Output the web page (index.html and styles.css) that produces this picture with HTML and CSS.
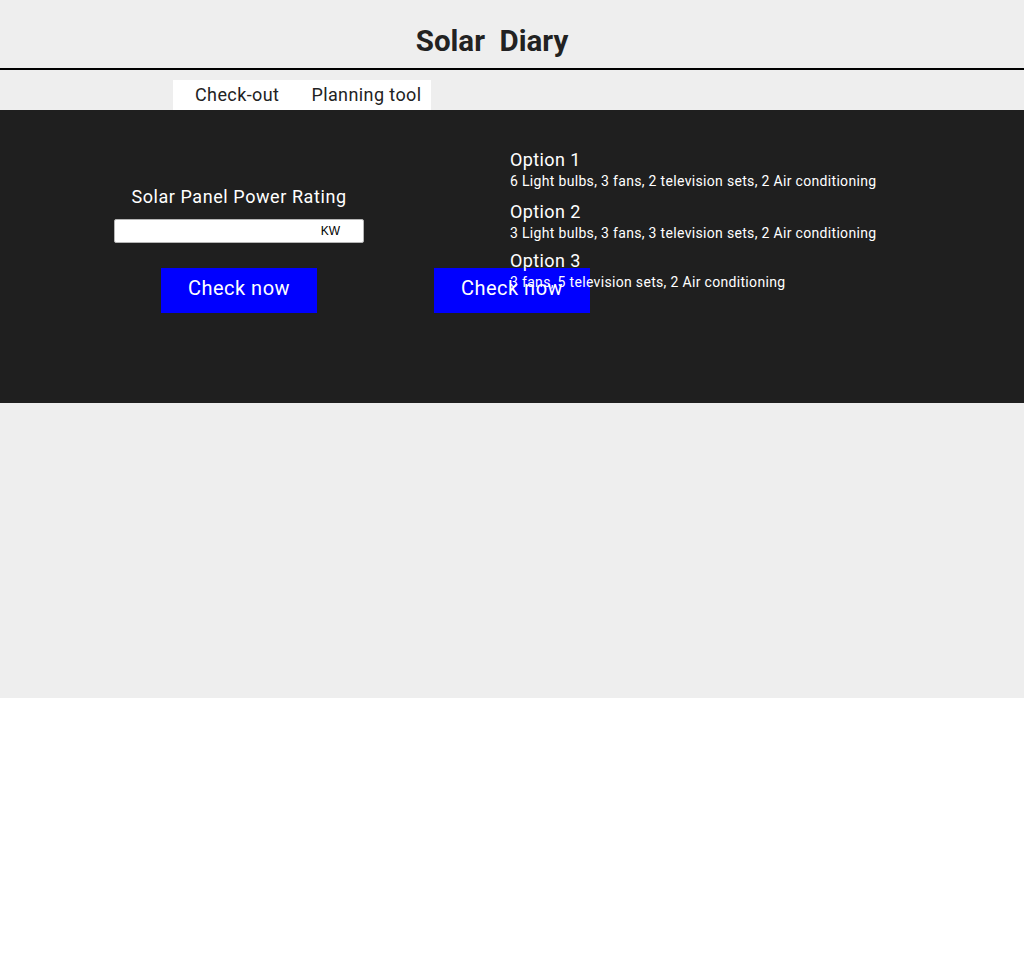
FILE: index.html
```html
<!DOCTYPE html>
<html lang="en">
<head>
<meta charset="utf-8">
<title>Solar Diary</title>
<link rel="stylesheet" href="styles.css">
</head>
<body>
<div class="page">
  <header class="header">
    <h1 class="title">Solar&nbsp; Diary</h1>
  </header>
  <nav class="nav">
    <a class="nav-link" href="#">Check-out</a>
    <a class="nav-link" href="#">Planning tool</a>
  </nav>
  <section class="panel">
    <div class="calc">
      <div class="calc-label">Solar Panel Power Rating</div>
      <div class="field">
        <input class="field-input" type="text">
        <span class="field-unit">KW</span>
      </div>
      <button class="btn">Check now</button>
    </div>
    <div class="results">
      <button class="btn btn-results">Check now</button>
      <div class="options">
        <div class="option">
          <div class="option-title">Option 1</div>
          <div class="option-desc">6 Light bulbs, 3 fans, 2 television sets, 2 Air conditioning</div>
        </div>
        <div class="option option-2">
          <div class="option-title">Option 2</div>
          <div class="option-desc">3 Light bulbs, 3 fans, 3 television sets, 2 Air conditioning</div>
        </div>
        <div class="option option-3">
          <div class="option-title">Option 3</div>
          <div class="option-desc">3 fans, 5 television sets, 2 Air conditioning</div>
        </div>
      </div>
    </div>
  </section>
  <div class="spacer"></div>
</div>
</body>
</html>
```

FILE: styles.css
```css
html, body {
  margin: 0;
  padding: 0;
  background: #ffffff;
}

body {
  font-family: Roboto, "Noto Sans", sans-serif;
  color: #222222;
  letter-spacing: 0.025em;
}

.page {
  background: #eeeeee;
}

.header {
  padding: 24px 40px 9px 0;
  border-bottom: 2px solid #000000;
  text-align: center;
}

.title {
  margin: 0;
  font-size: 29.5px;
  font-weight: 700;
  line-height: 35px;
  letter-spacing: 0;
  color: #222222;
}

.nav {
  display: flex;
  width: 258px;
  margin: 10px 0 0 173px;
  padding-left: 6px;
  box-sizing: border-box;
  background: #ffffff;
  white-space: nowrap;
}

.nav-link {
  flex-shrink: 0;
  padding: 0 16px;
  font-size: 18px;
  line-height: 30px;
  color: #222222;
  text-decoration: none;
}

.panel {
  display: flex;
  height: 293px;
  box-sizing: border-box;
  padding-left: 100px;
  background: #1f1f1f;
  color: #ffffff;
}

.calc {
  display: flex;
  flex-direction: column;
  align-items: center;
  width: 278px;
  margin-right: 56px;
  padding-top: 76px;
}

.calc-label {
  font-size: 18px;
  line-height: 21px;
  letter-spacing: 0.032em;
  white-space: nowrap;
}

.field {
  display: flex;
  align-items: center;
  width: 250px;
  height: 24px;
  margin-top: 12px;
  box-sizing: border-box;
  background: #ffffff;
  border: 1px solid #b5b5b5;
  border-radius: 2px;
}

.field-input {
  flex: 1;
  min-width: 0;
  height: 100%;
  padding: 0 4px;
  border: 0;
  background: transparent;
  outline: none;
}

.field-unit {
  padding-right: 23px;
  font-family: "Liberation Sans", Arial, sans-serif;
  font-size: 12px;
  letter-spacing: 0;
  color: #000000;
}

.btn {
  display: block;
  width: 156px;
  height: 45px;
  margin-top: 25px;
  padding: 0 0 4px;
  box-sizing: border-box;
  border: 0;
  border-radius: 0;
  background: #0000ff;
  color: #ffffff;
  font-family: Roboto, "Noto Sans", sans-serif;
  font-size: 20px;
  line-height: 23px;
  letter-spacing: 0.025em;
  white-space: nowrap;
  align-self: center;
}

.results {
  display: grid;
  flex: 1;
  align-items: start;
}

.options,
.btn-results {
  grid-area: 1 / 1;
}

.options {
  padding: 39px 0 0 76px;
}

.btn-results {
  align-self: start;
  justify-self: start;
  margin-top: 158px;
}

.option-title {
  font-size: 18px;
  line-height: 21px;
}

.option-desc {
  margin-top: 3px;
  font-size: 14px;
  line-height: 17px;
  letter-spacing: 0.023em;
  white-space: nowrap;
}

.option-2 {
  margin-top: 11px;
}

.option-3 {
  margin-top: 8px;
}

.spacer {
  height: 295px;
}
```
